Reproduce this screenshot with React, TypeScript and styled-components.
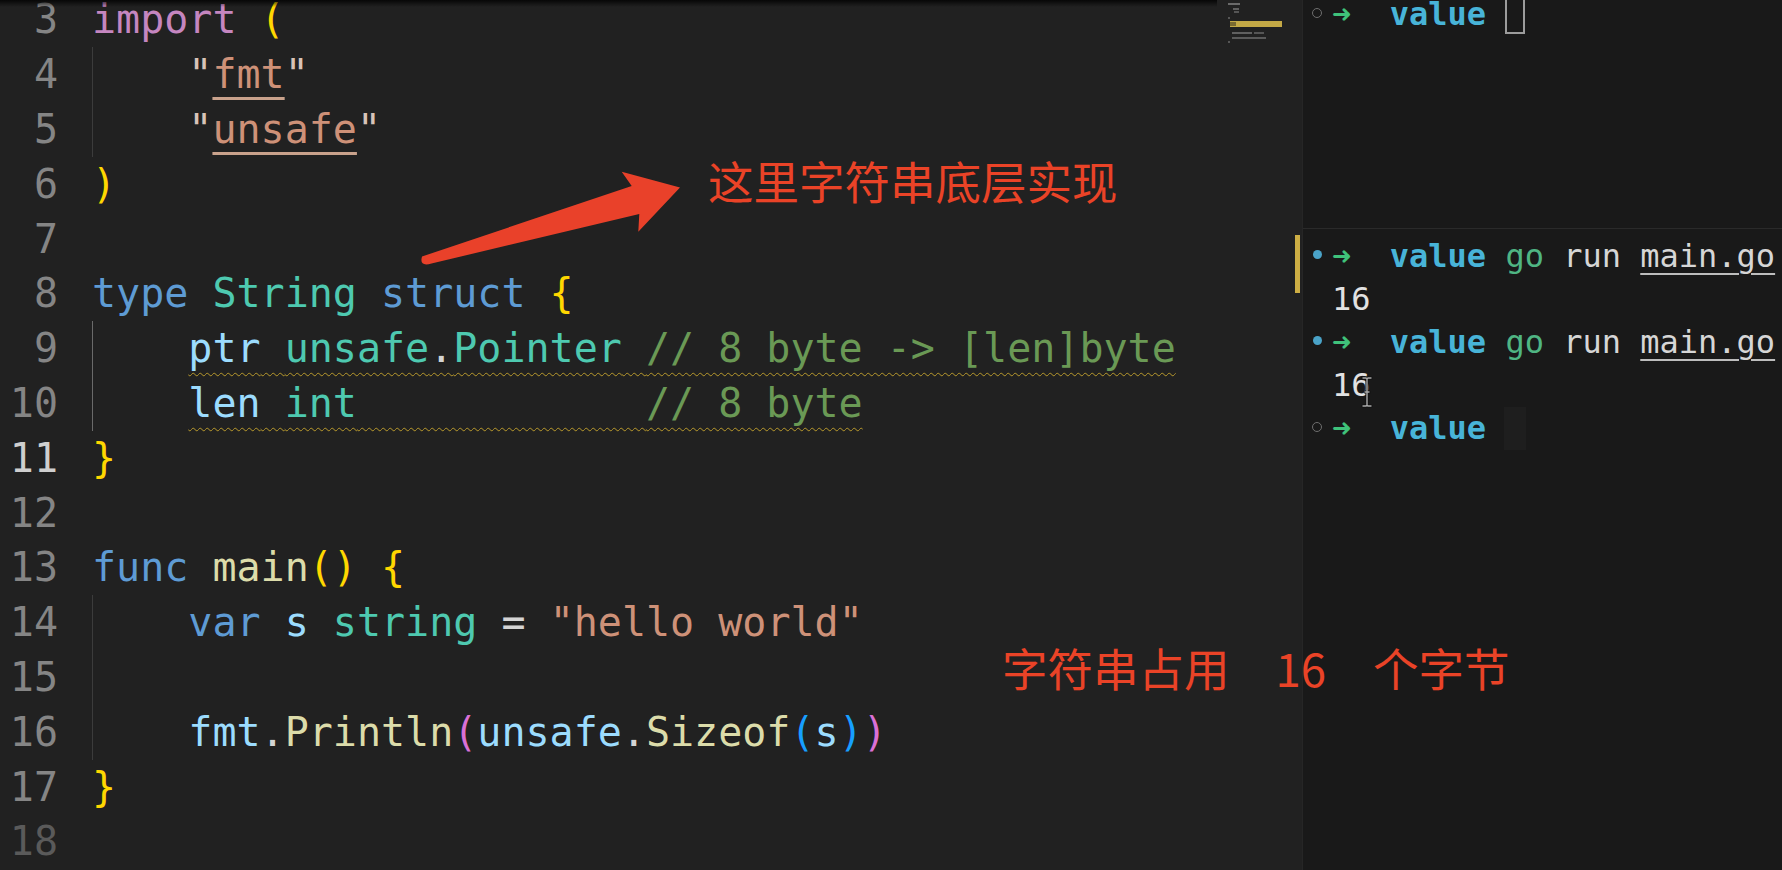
import React from "react";
import styled, { createGlobalStyle } from "styled-components";

const MONO = `"DejaVu Sans Mono", "Liberation Mono", monospace`;
const CJK = `"Noto Sans CJK SC", "Noto Sans", sans-serif`;

const GlobalStyle = createGlobalStyle`
  html, body { margin: 0; padding: 0; background: #191919; overflow: hidden; }
  #root { width: 1782px; height: 870px; }
`;

type Kind = "kw" | "imp" | "ty" | "v" | "fn" | "str" | "qs" | "cm" | "p" | "b1" | "b2" | "b3";

const palette: Record<Kind, string> = {
  kw: "#5e9bd4",
  imp: "#c586c0",
  ty: "#4ec9b0",
  v: "#9cdcfe",
  fn: "#dcdcaa",
  str: "#ce9178",
  qs: "#d8c3b8",
  cm: "#6a9955",
  p: "#d4d4d4",
  b1: "#ffd700",
  b2: "#da70d6",
  b3: "#179fff",
};

const Screen = styled.div`
  position: relative;
  display: flex;
  width: 1782px;
  height: 870px;
  overflow: hidden;
  background: #191919;
`;

const Editor = styled.section`
  display: flex;
  width: 1302px;
  flex: none;
  background: #212121;
`;

const CodeArea = styled.div`
  position: relative;
  flex: 1;
  overflow: hidden;
  &::before {
    content: "";
    position: absolute;
    left: 0;
    right: 5px;
    top: 0;
    height: 7px;
    background: linear-gradient(rgba(0, 0, 0, 0.8), rgba(0, 0, 0, 0));
    z-index: 2;
  }
`;

const Lines = styled.div`
  margin-top: -7.6px;
  font-family: ${MONO};
  font-size: 40px;
`;

const Line = styled.div`
  display: flex;
  height: 54.8px;
  line-height: 54.8px;
  white-space: pre;
`;

const LineNo = styled.span<{ $tone?: "active" | "dim" }>`
  width: 58px;
  flex: none;
  text-align: right;
  color: ${(p) => (p.$tone === "active" ? "#cfcfcf" : p.$tone === "dim" ? "#5a5a5a" : "#858585")};
`;

const Code = styled.span<{ $guide?: "on" | "active" }>`
  position: relative;
  margin-left: 34px;
  flex: 1;
  color: #d4d4d4;
  &::before {
    content: "";
    display: ${(p) => (p.$guide ? "block" : "none")};
    position: absolute;
    left: 0;
    top: 0;
    bottom: 0;
    width: 1px;
    background: ${(p) => (p.$guide === "active" ? "#6a6a6a" : "#3c3c3c")};
  }
`;

const T = styled.span<{ $k: Kind }>`
  color: ${(p) => palette[p.$k]};
`;

const Link = styled.span`
  text-decoration: underline;
  text-decoration-thickness: 3px;
  text-underline-offset: 9px;
  text-decoration-color: #c9a28c;
  text-decoration-skip-ink: none;
`;

const Squiggly = styled.span`
  text-decoration: underline wavy #b8992c;
  text-decoration-thickness: 1px;
  text-underline-offset: 10px;
  text-decoration-skip-ink: none;
`;

const Minimap = styled.div`
  width: 80px;
  flex: none;
`;

const Terminal = styled.section`
  flex: 1;
  display: flex;
  flex-direction: column;
  border-left: 1px solid #262626;
  background: #191919;
  font-family: ${MONO};
  font-size: 32px;
  color: #d6d6d6;
`;

const TopPane = styled.div`
  height: 228px;
  flex: none;
  overflow: hidden;
  border-bottom: 1px solid #2a2a2a;
`;

const BottomPane = styled.div`
  flex: 1;
  overflow: hidden;
  padding-top: 5.6px;
`;

const TermLines = styled.div<{ $shift?: number }>`
  margin-top: ${(p) => p.$shift ?? 0}px;
`;

const TermLine = styled.div`
  display: flex;
  align-items: center;
  height: 43px;
  line-height: 43px;
  white-space: pre;
`;

const Deco = styled.span`
  width: 29px;
  flex: none;
  display: flex;
  align-items: center;
  padding-left: 9px;
  box-sizing: border-box;
  margin-bottom: 3px;
`;

const Circle = styled.span<{ $filled?: boolean }>`
  display: block;
  box-sizing: border-box;
  width: ${(p) => (p.$filled ? 9 : 10)}px;
  height: ${(p) => (p.$filled ? 9 : 10)}px;
  border-radius: 50%;
  margin-left: ${(p) => (p.$filled ? 0.5 : 0)}px;
  background: ${(p) => (p.$filled ? "#4aa3c8" : "transparent")};
  border: ${(p) => (p.$filled ? "none" : "1.8px solid #6e6e6e")};
`;

const Prompt = styled.span`
  color: #3fc27a;
  font-weight: bold;
`;

const Dir = styled.span`
  color: #48b4d8;
  font-weight: bold;
`;

const Cmd = styled.span`
  color: #4fb583;
`;

const Path = styled.span`
  text-decoration: underline;
  text-decoration-thickness: 2px;
  text-underline-offset: 6px;
  text-decoration-color: #bdbdbd;
`;

const Output = styled.span`
  color: #e2e2e2;
`;

const CursorBox = styled.span<{ $ghost?: boolean }>`
  flex: none;
  align-self: ${(p) => (p.$ghost ? "stretch" : "flex-start")};
  box-sizing: border-box;
  width: ${(p) => (p.$ghost ? 22 : 20)}px;
  height: ${(p) => (p.$ghost ? "auto" : "41px")};
  margin-left: ${(p) => (p.$ghost ? -1 : 0)}px;
  border: ${(p) => (p.$ghost ? "none" : "2px solid #9c9c9c")};
  background: ${(p) => (p.$ghost ? "#1e1e1e" : "transparent")};
`;

const YellowBar = styled.div`
  position: absolute;
  left: 1295px;
  top: 235px;
  width: 5px;
  height: 58px;
  background: #cdae44;
`;

const IBeam = styled.svg`
  position: absolute;
  left: 1360px;
  top: 376px;
`;

const ArrowMark = styled.svg`
  position: absolute;
  left: 410px;
  top: 160px;
`;

const Note = styled.div`
  position: absolute;
  color: #ea4327;
  font-family: ${CJK};
  font-size: 45.5px;
  line-height: 46px;
  white-space: pre;
`;

const TopNote = styled(Note)`
  left: 708px;
  top: 157px;
`;

const BottomNote = styled(Note)`
  left: 1002px;
  top: 644px;
`;

const Num = styled.span`
  margin: 0 47px 0 46px;
`;

const Ind = "    ";

export default function App() {
  return (
    <>
      <GlobalStyle />
      <Screen>
        <Editor>
          <CodeArea>
            <Lines>
              <Line>
                <LineNo>3</LineNo>
                <Code>
                  <T $k="imp">import</T> <T $k="b1">(</T>
                </Code>
              </Line>
              <Line>
                <LineNo>4</LineNo>
                <Code $guide="on">
                  {Ind}
                  <T $k="qs">"</T>
                  <Link>
                    <T $k="str">fmt</T>
                  </Link>
                  <T $k="qs">"</T>
                </Code>
              </Line>
              <Line>
                <LineNo>5</LineNo>
                <Code $guide="on">
                  {Ind}
                  <T $k="qs">"</T>
                  <Link>
                    <T $k="str">unsafe</T>
                  </Link>
                  <T $k="qs">"</T>
                </Code>
              </Line>
              <Line>
                <LineNo>6</LineNo>
                <Code>
                  <T $k="b1">)</T>
                </Code>
              </Line>
              <Line>
                <LineNo>7</LineNo>
                <Code />
              </Line>
              <Line>
                <LineNo>8</LineNo>
                <Code>
                  <T $k="kw">type</T> <T $k="ty">String</T> <T $k="kw">struct</T> <T $k="b1">{"{"}</T>
                </Code>
              </Line>
              <Line>
                <LineNo>9</LineNo>
                <Code $guide="active">
                  {Ind}
                  <Squiggly>
                    <T $k="v">ptr</T> <T $k="ty">unsafe</T>
                    <T $k="p">.</T>
                    <T $k="ty">Pointer</T> <T $k="cm">// 8 byte -&gt; [len]byte</T>
                  </Squiggly>
                </Code>
              </Line>
              <Line>
                <LineNo>10</LineNo>
                <Code $guide="active">
                  {Ind}
                  <Squiggly>
                    <T $k="v">len</T> <T $k="ty">int</T>
                    {"            "}
                    <T $k="cm">// 8 byte</T>
                  </Squiggly>
                </Code>
              </Line>
              <Line>
                <LineNo $tone="active">11</LineNo>
                <Code>
                  <T $k="b1">{"}"}</T>
                </Code>
              </Line>
              <Line>
                <LineNo>12</LineNo>
                <Code />
              </Line>
              <Line>
                <LineNo>13</LineNo>
                <Code>
                  <T $k="kw">func</T> <T $k="fn">main</T>
                  <T $k="b1">()</T> <T $k="b1">{"{"}</T>
                </Code>
              </Line>
              <Line>
                <LineNo>14</LineNo>
                <Code $guide="on">
                  {Ind}
                  <T $k="kw">var</T> <T $k="v">s</T> <T $k="ty">string</T> <T $k="p">=</T>{" "}
                  <T $k="str">"hello world"</T>
                </Code>
              </Line>
              <Line>
                <LineNo>15</LineNo>
                <Code $guide="on" />
              </Line>
              <Line>
                <LineNo>16</LineNo>
                <Code $guide="on">
                  {Ind}
                  <T $k="v">fmt</T>
                  <T $k="p">.</T>
                  <T $k="fn">Println</T>
                  <T $k="b2">(</T>
                  <T $k="v">unsafe</T>
                  <T $k="p">.</T>
                  <T $k="fn">Sizeof</T>
                  <T $k="b3">(</T>
                  <T $k="v">s</T>
                  <T $k="b3">)</T>
                  <T $k="b2">)</T>
                </Code>
              </Line>
              <Line>
                <LineNo>17</LineNo>
                <Code>
                  <T $k="b1">{"}"}</T>
                </Code>
              </Line>
              <Line>
                <LineNo $tone="dim">18</LineNo>
                <Code />
              </Line>
            </Lines>
          </CodeArea>
          <Minimap>
            <svg width="80" height="60" viewBox="0 0 80 60">
              <rect x="6" y="3" width="12" height="2" fill="#8a8a8a" opacity="0.7" />
              <rect x="11" y="8" width="6" height="2" fill="#8a8a8a" opacity="0.6" />
              <rect x="12" y="11" width="5" height="2" fill="#8a8a8a" opacity="0.5" />
              <rect x="6" y="17" width="2" height="2" fill="#8a8a8a" opacity="0.5" />
              <rect x="8" y="21" width="52" height="6" fill="#c4a946" />
              <rect x="8" y="22" width="6" height="4" fill="#7a6a30" />
              <rect x="10" y="32" width="20" height="2" fill="#8a8a8a" opacity="0.6" />
              <rect x="32" y="32" width="10" height="2" fill="#8a8a8a" opacity="0.5" />
              <rect x="10" y="37" width="34" height="2" fill="#8a8a8a" opacity="0.55" />
              <rect x="6" y="41" width="2" height="2" fill="#8a8a8a" opacity="0.5" />
            </svg>
          </Minimap>
        </Editor>

        <Terminal>
          <TopPane>
            <TermLines $shift={-7.4}>
              <TermLine>
                <Deco>
                  <Circle />
                </Deco>
                <span>
                  <Prompt>➜</Prompt>
                  {"  "}
                  <Dir>value</Dir>{" "}
                </span>
                <CursorBox />
              </TermLine>
            </TermLines>
          </TopPane>
          <BottomPane>
            <TermLines>
              <TermLine>
                <Deco>
                  <Circle $filled />
                </Deco>
                <span>
                  <Prompt>➜</Prompt>
                  {"  "}
                  <Dir>value</Dir> <Cmd>go</Cmd> run <Path>main.go</Path>
                </span>
              </TermLine>
              <TermLine>
                <Deco />
                <Output>16</Output>
              </TermLine>
              <TermLine>
                <Deco>
                  <Circle $filled />
                </Deco>
                <span>
                  <Prompt>➜</Prompt>
                  {"  "}
                  <Dir>value</Dir> <Cmd>go</Cmd> run <Path>main.go</Path>
                </span>
              </TermLine>
              <TermLine>
                <Deco />
                <Output>16</Output>
              </TermLine>
              <TermLine>
                <Deco>
                  <Circle />
                </Deco>
                <span>
                  <Prompt>➜</Prompt>
                  {"  "}
                  <Dir>value</Dir>{" "}
                </span>
                <CursorBox $ghost />
              </TermLine>
            </TermLines>
          </BottomPane>
        </Terminal>

        <YellowBar />

        <IBeam width="14" height="32" viewBox="0 0 14 32">
          <path
            d="M3 2 H6 L7 3 L8 2 H11 M7 3 V29 M3 30 H6 L7 29 L8 30 H11 M5 16 H9"
            stroke="#111"
            strokeWidth="3.2"
            fill="none"
            strokeLinecap="round"
          />
          <path
            d="M3 2 H6 L7 3 L8 2 H11 M7 3 V29 M3 30 H6 L7 29 L8 30 H11 M5 16 H9"
            stroke="#a9a9a9"
            strokeWidth="1.4"
            fill="none"
            strokeLinecap="round"
          />
        </IBeam>

        <ArrowMark width="280" height="115" viewBox="410 160 280 115">
          <path
            d="M422 256.5 L631.7 186 L621.7 171.7 L680 187.5 L638.3 231.7 L639.3 214 L431.5 263.5 Q419 267 422 256.5 Z"
            fill="#e9412a"
          />
        </ArrowMark>

        <TopNote>这里字符串底层实现</TopNote>
        <BottomNote>
          字符串占用<Num>16</Num>个字节
        </BottomNote>
      </Screen>
    </>
  );
}
